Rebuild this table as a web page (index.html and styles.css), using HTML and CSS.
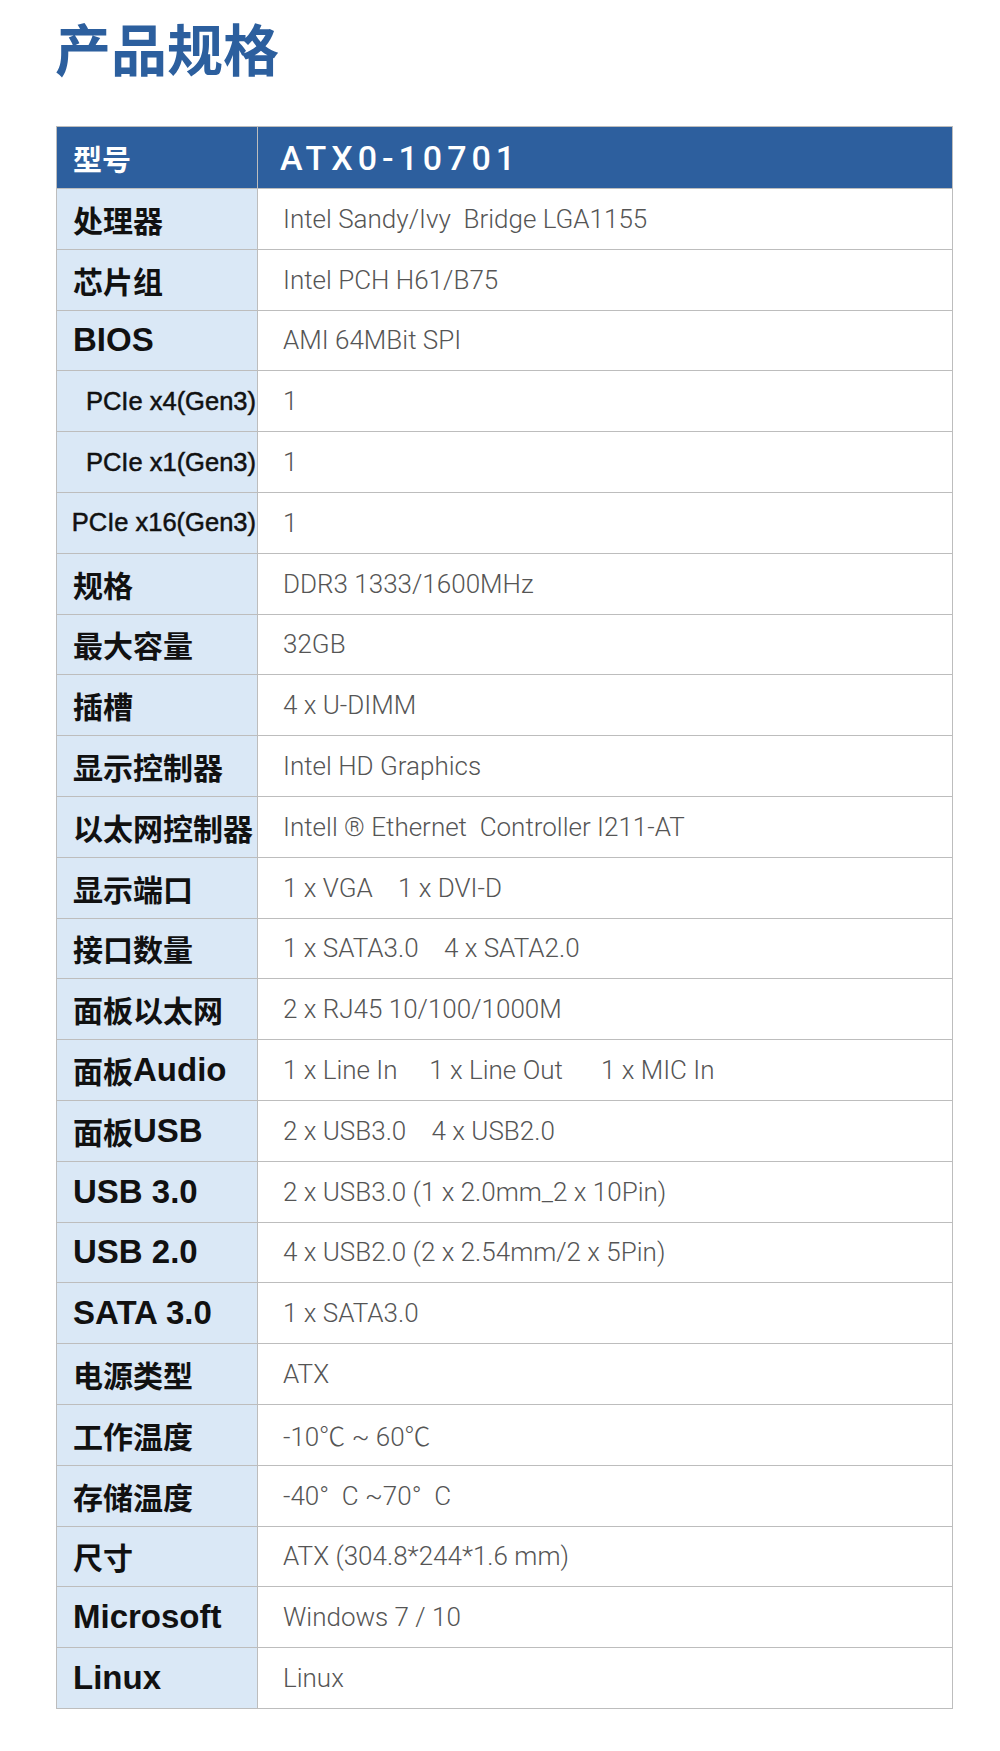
FILE: index.html
```html
<!DOCTYPE html>
<html lang="zh-CN">
<head>
<meta charset="utf-8">
<title>产品规格</title>
<link rel="stylesheet" href="styles.css">
</head>
<body>
<main class="page">
  <h1 class="title">产品规格</h1>
  <div class="spec">
    <div class="cell key head-key">型号</div>
    <div class="cell val head-val">ATX0-10701</div>

    <div class="cell key">处理器</div><div class="cell val">Intel Sandy/Ivy  Bridge LGA1155</div>
    <div class="cell key">芯片组</div><div class="cell val">Intel PCH H61/B75</div>
    <div class="cell key en">BIOS</div><div class="cell val">AMI 64MBit SPI</div>
    <div class="cell key pcie">PCIe x4(Gen3)</div><div class="cell val">1</div>
    <div class="cell key pcie">PCIe x1(Gen3)</div><div class="cell val">1</div>
    <div class="cell key pcie">PCIe x16(Gen3)</div><div class="cell val">1</div>
    <div class="cell key">规格</div><div class="cell val">DDR3 1333/1600MHz</div>
    <div class="cell key">最大容量</div><div class="cell val">32GB</div>
    <div class="cell key">插槽</div><div class="cell val">4 x U-DIMM</div>
    <div class="cell key">显示控制器</div><div class="cell val">Intel HD Graphics</div>
    <div class="cell key">以太网控制器</div><div class="cell val">Intell ® Ethernet  Controller I211-AT</div>
    <div class="cell key">显示端口</div><div class="cell val">1 x VGA    1 x DVI-D</div>
    <div class="cell key">接口数量</div><div class="cell val">1 x SATA3.0    4 x SATA2.0</div>
    <div class="cell key">面板以太网</div><div class="cell val">2 x RJ45 10/100/1000M</div>
    <div class="cell key">面板<span class="lat">Audio</span></div><div class="cell val">1 x Line In     1 x Line Out      1 x MIC In</div>
    <div class="cell key">面板<span class="lat">USB</span></div><div class="cell val">2 x USB3.0    4 x USB2.0</div>
    <div class="cell key en">USB 3.0</div><div class="cell val">2 x USB3.0 (1 x 2.0mm_2 x 10Pin)</div>
    <div class="cell key en">USB 2.0</div><div class="cell val">4 x USB2.0 (2 x 2.54mm/2 x 5Pin)</div>
    <div class="cell key en">SATA 3.0</div><div class="cell val">1 x SATA3.0</div>
    <div class="cell key">电源类型</div><div class="cell val">ATX</div>
    <div class="cell key">工作温度</div><div class="cell val">-10℃ ~ 60℃</div>
    <div class="cell key">存储温度</div><div class="cell val">-40°  C ~70°  C</div>
    <div class="cell key">尺寸</div><div class="cell val">ATX (304.8*244*1.6 mm)</div>
    <div class="cell key en">Microsoft</div><div class="cell val">Windows 7 / 10</div>
    <div class="cell key en">Linux</div><div class="cell val">Linux</div>
  </div>
</main>
</body>
</html>
```
FILE: styles.css
```css
html, body {
  margin: 0;
  padding: 0;
  background: #ffffff;
}

body {
  font-family: "Liberation Sans", "Noto Sans CJK SC", sans-serif;
  color: #111;
}

.page {
  width: 1000px;
  box-sizing: border-box;
  padding: 0 0 0 56px;
}

.title {
  margin: 0;
  padding-top: 19px;
  height: 126px;
  box-sizing: border-box;
  font-family: "Noto Sans CJK SC", sans-serif;
  font-weight: 700;
  font-size: 56px;
  line-height: 56px;
  color: #2c5f9e;
  margin-left: -1px;
}

.spec {
  width: 897px;
  display: grid;
  grid-template-columns: 201px 1fr;
  grid-template-rows: 62px;
  grid-auto-rows: 60.8px;
  border-top: 1px solid #bdbdbd;
  border-left: 1px solid #bdbdbd;
  box-sizing: border-box;
}

.cell {
  display: flex;
  align-items: center;
  border-right: 1px solid #bdbdbd;
  border-bottom: 1px solid #bdbdbd;
  box-sizing: border-box;
  white-space: pre;
  overflow: visible;
}

.key {
  background: #dae8f6;
  padding-left: 16px;
  font-weight: 700;
  font-size: 30px;
  color: #111;
}

.key.en,
.key .lat {
  font-size: 33px;
}

.key.pcie {
  justify-content: flex-end;
  padding-left: 0;
  padding-right: 1px;
  font-size: 25.5px;
  font-weight: 400;
  -webkit-text-stroke: 0.5px #111;
}

.val {
  padding-left: 25px;
  font-family: "Roboto", "Noto Sans CJK SC", sans-serif;
  font-weight: 300;
  font-size: 26px;
  color: #555;
}

.head-key,
.head-val {
  background: #2d5f9e;
  color: #ffffff;
}

.head-key {
  font-size: 29px;
}

.head-val {
  padding-left: 22px;
  font-family: "Roboto", sans-serif;
  font-weight: 500;
  font-size: 34px;
  letter-spacing: 5px;
  color: #ffffff;
}
```
